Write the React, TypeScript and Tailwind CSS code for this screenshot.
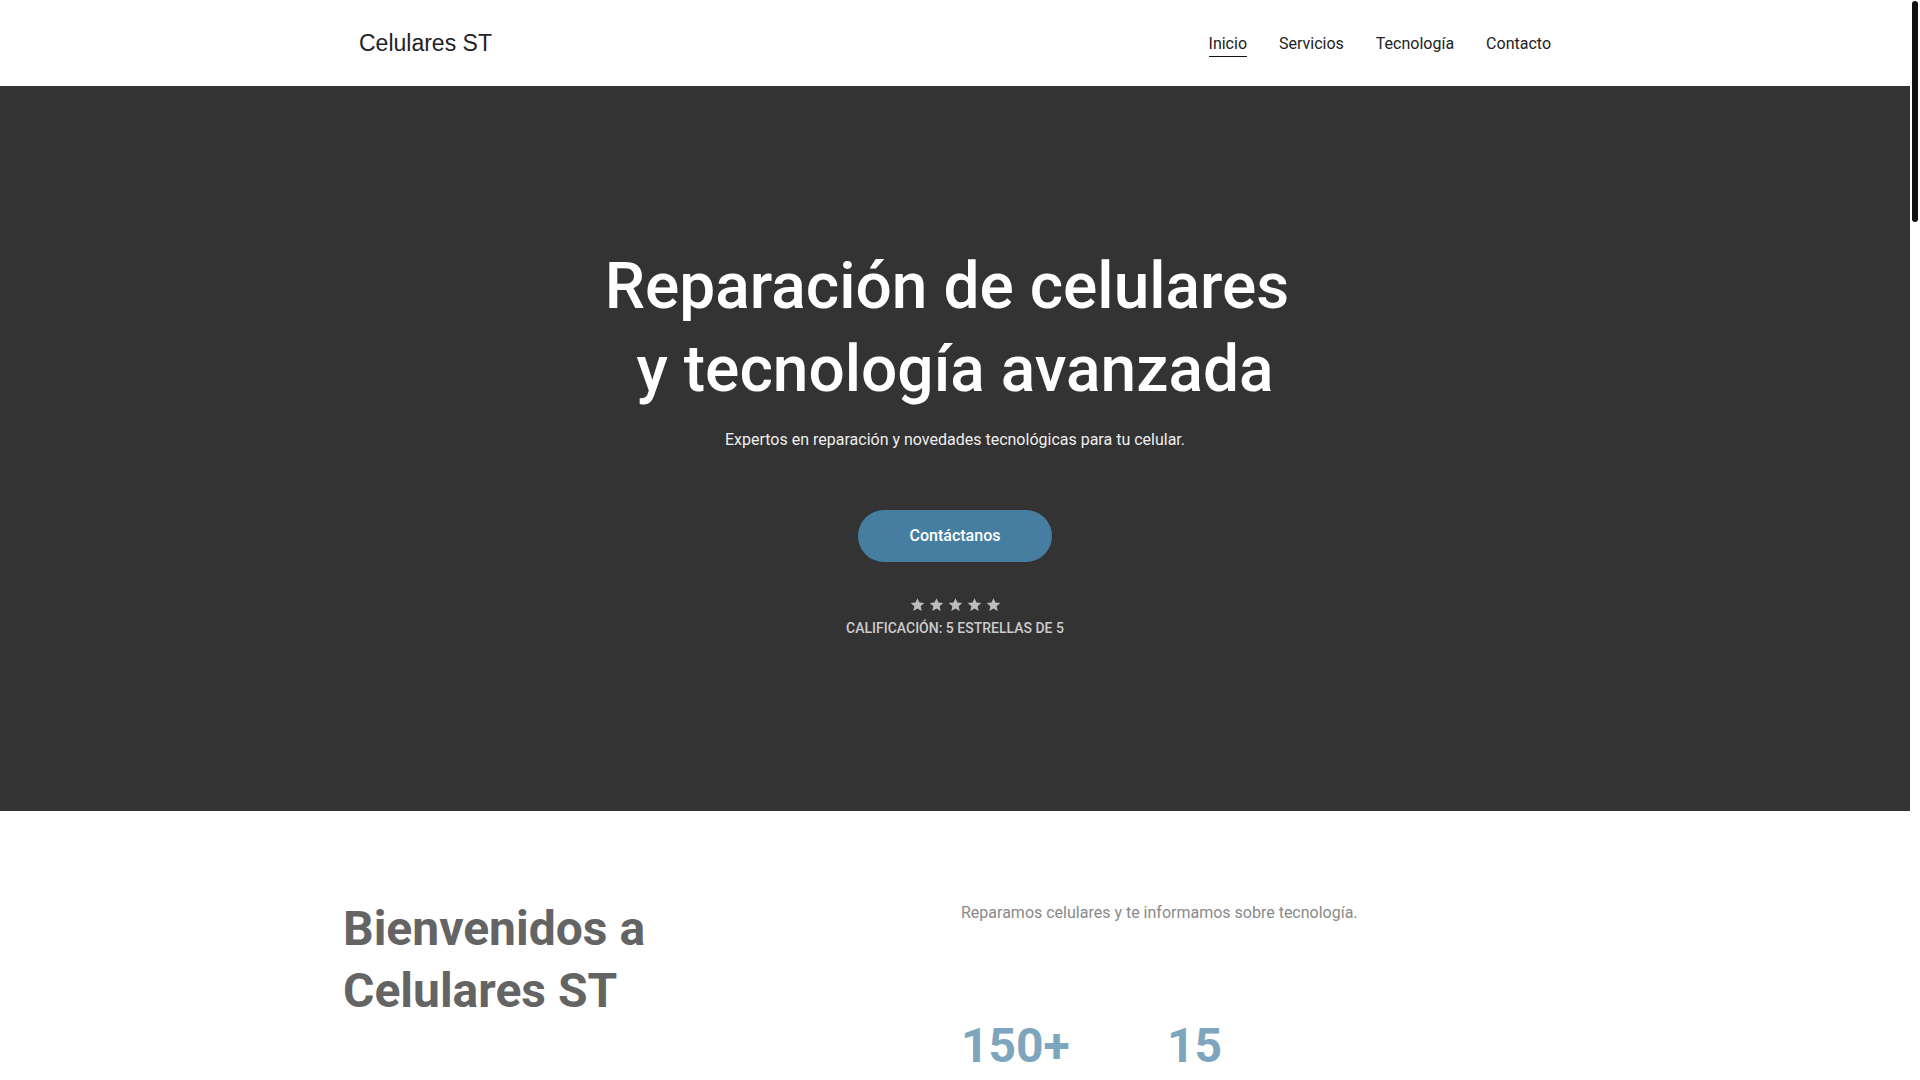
import React from 'react';

const navLinks = ['Inicio', 'Servicios', 'Tecnología', 'Contacto'];

const stats = [
  { value: '150+', label: 'Celulares reparados' },
  { value: '15', label: 'Consejos tecnológicos' },
];

const services = [
  { title: 'Cambio de pantalla', text: 'Reemplazamos pantallas rotas con repuestos de calidad y garantía.' },
  { title: 'Batería', text: 'Cambiamos baterías agotadas para que tu celular dure todo el día.' },
  { title: 'Software', text: 'Actualizaciones, respaldo de datos y solución de fallas del sistema.' },
];

function Star() {
  return (
    <svg width="15" height="15" viewBox="0 0 24 24" fill="#bdbdbd" aria-hidden="true">
      <path d="M12 1.8l3.1 7.1 7.7.7-5.8 5.1 1.7 7.6L12 18.3l-6.7 4 1.7-7.6L1.2 9.6l7.7-.7z" />
    </svg>
  );
}

function Header() {
  return (
    <header className="h-[86px] bg-white">
      <div className="mx-auto flex h-full w-[1192px] items-center justify-between">
        <a className="font-['Liberation_Sans',Arial,sans-serif] text-[23px] text-[#1f2328]">Celulares ST</a>
        <nav className="flex items-center gap-[32px] pt-[2px] font-['Roboto',sans-serif] text-[16px] text-[#222]">
          {navLinks.map((link, i) => (
            <a
              key={link}
              className={
                i === 0
                  ? 'border-b-[1.5px] border-[#111] leading-6'
                  : 'border-b-[1.5px] border-transparent leading-6'
              }
            >
              {link}
            </a>
          ))}
        </nav>
      </div>
    </header>
  );
}

function Hero() {
  return (
    <section className="flex h-[725px] flex-col items-center bg-[#333333] pt-[159px] font-['Roboto',sans-serif] text-center">
      <h1 className="text-[64px] font-medium leading-[83px] text-white">
        Reparación de celulares&nbsp;
        <br />
        y tecnología avanzada
      </h1>
      <p className="mt-[17px] text-[16px] leading-6 text-[#eeeeee]">
        Expertos en reparación y novedades tecnológicas para tu celular.
      </p>
      <a className="mt-[58px] flex h-[52px] w-[194px] items-center justify-center rounded-full bg-[#467ea1] text-[16px] font-medium text-white">
        Contáctanos
      </a>
      <div className="mt-[35px] flex gap-[4px]">
        {[0, 1, 2, 3, 4].map((n) => (
          <Star key={n} />
        ))}
      </div>
      <p className="mt-[6px] text-[14px] font-medium leading-5 text-[#cccccc]">CALIFICACIÓN: 5 ESTRELLAS DE 5</p>
    </section>
  );
}

function About() {
  return (
    <section className="h-[800px] bg-white font-['Roboto',sans-serif]">
      <div className="mx-auto grid w-[1224px] grid-cols-2 gap-[12px] pt-[87px]">
        <h2 className="text-[48px] font-bold leading-[62px] text-[#646464]">
          Bienvenidos a
          <br />
          Celulares ST
        </h2>
        <div className="pt-[3px]">
          <p className="text-[16px] leading-6 text-[#8a8a8a]">Reparamos celulares y te informamos sobre tecnología.</p>
          <div className="mt-[92px] flex gap-[90px]">
            {stats.map((s) => (
              <div key={s.value} className="w-[116px]">
                <div className="text-[48px] font-bold leading-[58px] text-[#7ea5be]">{s.value}</div>
                <div className="mt-[2px] text-[14px] leading-5 text-[#999]">{s.label}</div>
              </div>
            ))}
          </div>
        </div>
      </div>
    </section>
  );
}

function Services() {
  return (
    <section className="h-[1200px] bg-[#f5f5f5] font-['Roboto',sans-serif]">
      <div className="mx-auto w-[1224px] pt-[120px]">
        <h2 className="text-center text-[48px] font-bold text-[#646464]">Servicios</h2>
        <div className="mt-16 grid grid-cols-3 gap-8">
          {services.map((s) => (
            <div key={s.title} className="rounded-lg bg-white p-8">
              <h3 className="text-[22px] font-medium text-[#333]">{s.title}</h3>
              <p className="mt-3 text-[16px] leading-6 text-[#888]">{s.text}</p>
            </div>
          ))}
        </div>
      </div>
    </section>
  );
}

function Tech() {
  return (
    <section className="h-[1200px] bg-white font-['Roboto',sans-serif]">
      <div className="mx-auto w-[1224px] pt-[120px]">
        <h2 className="text-[48px] font-bold text-[#646464]">Tecnología</h2>
        <p className="mt-6 w-[600px] text-[16px] leading-6 text-[#888]">
          Noticias, consejos y novedades sobre los últimos celulares y accesorios del mercado.
        </p>
      </div>
    </section>
  );
}

function Contact() {
  return (
    <section className="h-[1000px] bg-[#333333] font-['Roboto',sans-serif]">
      <div className="mx-auto w-[1224px] pt-[120px] text-center">
        <h2 className="text-[48px] font-bold text-white">Contacto</h2>
        <p className="mt-6 text-[16px] text-[#ddd]">Escríbenos y te responderemos a la brevedad.</p>
      </div>
    </section>
  );
}

export default function App() {
  return (
    <div className="flex h-screen bg-white">
      <div className="h-full flex-1 overflow-y-auto [scrollbar-width:none]">
        <Header />
        <Hero />
        <About />
        <Services />
        <Tech />
        <Contact />
        <footer className="flex h-[269px] items-center justify-center bg-white font-['Roboto',sans-serif] text-[14px] text-[#888]">
          © Celulares ST. Todos los derechos reservados.
        </footer>
      </div>
      {/* scrollbar as drawn in the reference */}
      <div className="w-[10px] shrink-0 bg-white pt-[1px]">
        <div className="ml-[2px] h-[221px] w-[6px] rounded-full bg-[#111]" />
      </div>
    </div>
  );
}
